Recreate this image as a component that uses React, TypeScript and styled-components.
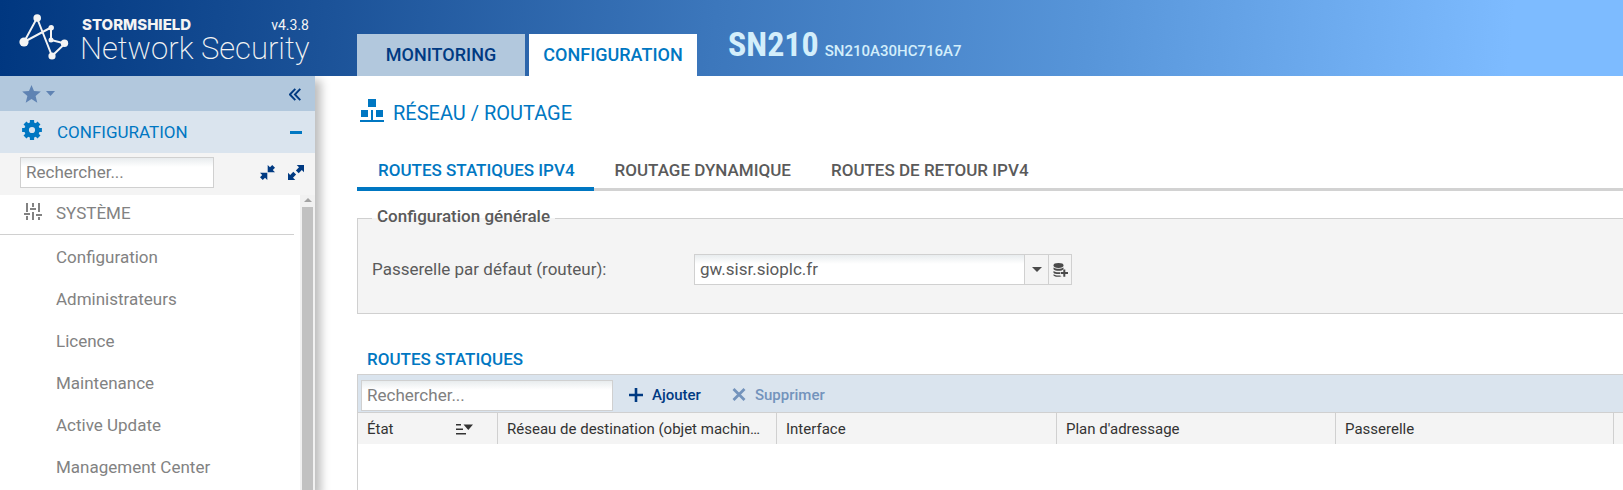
import React from 'react';
import styled, { createGlobalStyle } from 'styled-components';

const color = {
  navy: '#003a82',
  blue: '#0077c2',
  steel: '#b2c8dd',
  pale: '#dae4ee',
  panel: '#f4f4f4',
  line: '#d0d0d0',
  text: '#5a5a5a',
  muted: '#828282',
};

const GlobalStyle = createGlobalStyle`
  * { box-sizing: border-box; }
  html, body, #root { height: 100%; }
  body {
    margin: 0;
    overflow: hidden;
    background: #fff;
    color: ${color.text};
    font: 16px/20px Roboto, "Liberation Sans", sans-serif;
  }
  svg { display: block; flex: none; }
  button, input { font: inherit; margin: 0; }
  a { color: inherit; text-decoration: none; }
`;

const Page = styled.div`
  display: flex;
  flex-direction: column;
  height: 100%;
`;

const Header = styled.header`
  display: flex;
  flex: none;
  height: 76px;
  background: linear-gradient(95deg, #003780 0%, #1b5298 20%, #3c77bc 44%, #5795d9 67%, #7dbbff 93%);
`;

const Brand = styled.div`
  display: flex;
  flex: none;
  width: 357px;
  padding: 12px 0 0 18px;
  gap: 8px;
  color: #f4f4f4;
`;

const BrandText = styled.div`
  display: flex;
  flex-direction: column;
  width: 229px;
  padding-top: 4px;
`;

const BrandTop = styled.div`
  display: flex;
  justify-content: space-between;
  height: 18px;
`;

const Company = styled.span`
  padding-left: 2px;
  font: 800 15px/18px Inter, sans-serif;
`;

const Version = styled.span`
  font-size: 14px;
  line-height: 18px;
`;

const Product = styled.span`
  font-size: 31px;
  font-weight: 200;
  line-height: 30px;
  white-space: nowrap;
`;

const MainTabs = styled.nav`
  display: flex;
  align-items: flex-end;
  gap: 4px;
`;

const MainTab = styled.a<{ $active?: boolean }>`
  width: 168px;
  height: 42px;
  font-size: 18px;
  font-weight: 500;
  line-height: 42px;
  text-align: center;
  color: ${p => (p.$active ? color.blue : color.navy)};
  background: ${p => (p.$active ? '#fff' : color.steel)};
`;

const Device = styled.div`
  display: flex;
  align-items: baseline;
  gap: 6px;
  padding: 20px 0 0 31px;
  color: #d3eefb;
`;

const Model = styled.strong`
  font: 700 34px/48px "Roboto Condensed", "Liberation Sans Narrow", Roboto, sans-serif;
`;

const Serial = styled.span`
  font-size: 15px;
  font-weight: 500;
`;

const Body = styled.div`
  display: flex;
  flex: 1;
  min-height: 0;
`;

const Sidebar = styled.aside`
  display: flex;
  flex-direction: column;
  flex: none;
  width: 315px;
  background: #fff;
  box-shadow: 4px 6px 9px 2px rgba(0, 0, 0, 0.26);
  clip-path: inset(0 -20px 0 0);
`;

const SideBar = styled.div<{ $height: number; $bg: string }>`
  display: flex;
  align-items: center;
  justify-content: space-between;
  flex: none;
  height: ${p => p.$height}px;
  padding: 0 12px 0 20px;
  background: ${p => p.$bg};
`;

const SearchBar = styled(SideBar)`
  padding-bottom: 3px;
`;

const IconButton = styled.button`
  display: flex;
  align-items: center;
  gap: 5px;
  padding: 0 2px;
  border: 0;
  background: none;
  color: ${color.navy};
`;

const FavButton = styled(IconButton)`
  color: #5f83b3;
`;

const SideTitle = styled.h2`
  display: flex;
  flex: 1;
  align-items: center;
  gap: 15px;
  margin: 0;
  padding-left: 2px;
  font-size: 17px;
  font-weight: 400;
  color: ${color.blue};
`;

const ToggleButton = styled(IconButton)`
  padding: 0 1px;
  color: ${color.blue};
`;

const ToolGroup = styled.div`
  display: flex;
  gap: 9px;
  margin-right: -3px;
`;

const TextField = styled.input<{ $width: number }>`
  width: ${p => p.$width}px;
  height: 31px;
  padding: 0 5px 2px;
  border: 1px solid ${color.line};
  border-radius: 0;
  outline: 0;
  font-size: 17px;
  color: ${color.text};
  background: linear-gradient(#e8ecee, #fff 9px);
  &::placeholder { color: #808080; opacity: 1; }
`;

const MenuArea = styled.div`
  display: flex;
  flex: 1;
  min-height: 0;
  overflow: hidden;
`;

const Menu = styled.nav`
  flex: 1;
`;

const MenuGroup = styled.h3`
  display: flex;
  align-items: center;
  gap: 14px;
  height: 40px;
  margin: 0 6px 1px 0;
  padding: 0 0 3px 24px;
  border-bottom: 1px solid ${color.line};
  font-size: 17px;
  font-weight: 400;
  color: ${color.muted};
`;

const MenuList = styled.ul`
  margin: 0;
  padding: 0;
  list-style: none;
`;

const MenuLink = styled.a`
  display: block;
  height: 42px;
  padding-left: 56px;
  font-size: 17px;
  line-height: 42px;
  color: ${color.muted};
`;

const ScrollTrack = styled.div`
  display: flex;
  flex-direction: column;
  align-items: center;
  width: 15px;
  padding-top: 3px;
  gap: 5px;
  background: #f1f1f1;
`;

const ScrollThumb = styled.div`
  flex: 1;
  width: 11px;
  background: #c1c1c1;
`;

const Main = styled.main`
  display: flex;
  flex: 1;
  flex-direction: column;
  min-width: 0;
  padding-left: 42px;
`;

const PageTitle = styled.h1`
  display: flex;
  align-items: center;
  gap: 9px;
  margin: 0;
  padding: 23px 0 0 3px;
  font-size: 20px;
  font-weight: 400;
  line-height: 28px;
  color: ${color.blue};
`;

const SubTabs = styled.nav`
  display: flex;
  flex: none;
  height: 44px;
  margin-top: 20px;
  box-shadow: inset 0 -3px #d2d2d2;
`;

const SubTab = styled.a<{ $active?: boolean }>`
  padding: 0 19px 0 21px;
  border-bottom: 4px solid ${p => (p.$active ? color.blue : 'transparent')};
  font-size: 17px;
  font-weight: 500;
  line-height: 46px;
  color: ${p => (p.$active ? color.blue : color.text)};
`;

const Fieldset = styled.fieldset`
  display: flex;
  align-items: center;
  margin: 15px -1px 0 0;
  padding: 24px 14px 28px;
  border: 1px solid ${color.line};
  background: ${color.panel};
`;

const Legend = styled.legend`
  padding: 0 5px 4px;
  font-size: 17px;
  font-weight: 500;
  line-height: 20px;
`;

const FieldLabel = styled.label`
  width: 322px;
  padding-bottom: 2px;
  font-size: 17px;
`;

const Combo = styled.div`
  display: flex;
`;

const ComboButton = styled.button<{ $width: number }>`
  display: flex;
  align-items: center;
  justify-content: center;
  width: ${p => p.$width}px;
  height: 31px;
  padding: 0;
  border: 1px solid ${color.line};
  border-left: 0;
  background: ${color.panel};
  color: #4a4a4a;
`;

const GridTitle = styled.h2`
  margin: 35px 0 0;
  padding: 0 0 5px 10px;
  font-size: 17px;
  font-weight: 500;
  line-height: 20px;
  color: ${color.blue};
`;

const Grid = styled.section`
  flex: 1;
  border: solid ${color.line};
  border-width: 1px 0 0 1px;
`;

const Toolbar = styled.div`
  display: flex;
  align-items: center;
  gap: 16px;
  height: 38px;
  padding: 4px 0 0 3px;
  border-bottom: 1px solid ${color.line};
  background: ${color.pale};
`;

const ToolButton = styled.button`
  display: flex;
  align-items: center;
  gap: 9px;
  padding: 0 0 2px;
  margin-right: 15px;
  border: 0;
  background: none;
  font-size: 15px;
  font-weight: 500;
  color: ${color.navy};
  &:disabled { color: #7393bc; }
`;

const Table = styled.table`
  width: 100%;
  table-layout: fixed;
  border-collapse: separate;
  border-spacing: 0;
`;

const Column = styled.col<{ $width?: number }>`
  width: ${p => (p.$width ? `${p.$width}px` : 'auto')};
`;

const Th = styled.th`
  height: 31px;
  padding: 0 9px;
  overflow: hidden;
  border-right: 1px solid ${color.line};
  background: ${color.panel};
  font-size: 15px;
  font-weight: 400;
  line-height: 20px;
  text-align: left;
  text-overflow: ellipsis;
  white-space: nowrap;
  color: #333;
  &:last-child { border-right: 0; padding: 0; }
`;

const SortHeading = styled.div`
  display: flex;
  align-items: center;
  justify-content: space-between;
  padding-right: 15px;
`;

const Caret = ({ width = 9, height = 5 }) => (
  <svg width={width} height={height} viewBox="0 0 10 5" preserveAspectRatio="none" fill="currentColor">
    <path d="M0 0h10L5 5z" />
  </svg>
);

const Logo = () => (
  <svg width="54" height="52" viewBox="18 12 54 52" fill="#f4f4f4">
    <path d="M52 56 37 18 24 42 51 27.500V40l14 3.500z" fill="none" stroke="#f4f4f4" strokeWidth="2" />
    <circle cx="37.200" cy="18" r="3.800" />
    <circle cx="24" cy="42" r="4.600" />
    <circle cx="51.200" cy="27.700" r="2.700" />
    <circle cx="51" cy="40" r="2.500" />
    <circle cx="64.500" cy="43.300" r="3.700" />
    <circle cx="52" cy="56" r="3.600" />
  </svg>
);

const StarIcon = () => (
  <svg width="19" height="18" viewBox="0 0 19 18" fill="currentColor">
    <path d="M9.500 0l2.500 6.100 6.800.500-5.200 4.300 1.700 6.900-5.800-3.800-5.800 3.800 1.700-6.900L.200 6.600 7 6.100z" />
  </svg>
);

const GearIcon = () => (
  <svg width="20" height="24" viewBox="-10 -10 20 24" fill="none" stroke="currentColor">
    <circle r="5.400" strokeWidth="4.600" />
    {[0, 45, 90, 135].map(angle => (
      <path key={angle} d="M0-9.900v3.900M0 6v3.900" strokeWidth="4.200" transform={`rotate(${angle})`} />
    ))}
  </svg>
);

const CollapseIcon = () => (
  <svg width="12" height="15" viewBox="0 -2 12 15" fill="none" stroke="currentColor" strokeWidth="1.900">
    <path d="M6.300.800.900 6.500l5.400 5.700M11.300.800 5.900 6.500l5.400 5.700" />
  </svg>
);

const ShrinkIcon = () => (
  <svg width="15" height="15" viewBox="0 0 15 15" fill="currentColor">
    <path d="M7.700 7.300V0L10 2.200 12.200 0 15 2.800l-2.200 2.200L15 7.300zM7.300 7.700V15L5 12.800 2.800 15 0 12.200 2.200 10 0 7.700z" />
  </svg>
);

const GrowIcon = () => (
  <svg width="16" height="15" viewBox="0 0 16 15" fill="currentColor">
    <path d="M16 0v7.300l-2.200-2.200-3.100 3.100-2.800-2.800L11 2.300 8.700 0zM0 15V7.700l2.200 2.200 3.100-3.100 2.800 2.800L5 12.700 7.300 15z" />
  </svg>
);

const SlidersIcon = () => (
  <svg width="18" height="21" viewBox="0 0 18 21" fill="currentColor">
    <path d="M2 0h2v9H2zM0 10h6v2H0zM2 13h2v4H2zM8 0h2v4H8zM6 5h6v2H6zM8 9h2v8H8zM14 0h2v9h-2zM12 11h6v2h-6zM14 14h2v3h-2z" />
  </svg>
);

const NetworkIcon = () => (
  <svg width="24" height="28" viewBox="0 0 24 28" fill="currentColor">
    <path d="M8 0h8v8H8zM1 11h7v7H1zM16 11h7v7h-7zM11 11h2v10h11v2H0v-2h11z" />
  </svg>
);

const ObjectAddIcon = () => (
  <svg width="15" height="14" viewBox="0 0 15 14" fill="currentColor">
    <ellipse cx="5.500" cy="2.500" rx="5" ry="2.400" />
    <path d="M.500 4.500c2.500 1.800 7.500 1.800 10 0v1.800L8.700 7.500C5.500 8.200 2 7.800.500 6.300zM.500 8c1.800 1.300 4.200 1.500 6.500 1.200V11C4.500 11.300 1.600 11 .500 9.700zM.500 11.300C2.500 12.600 4.800 12.700 7 12.400l1.500.8C6 14 2 14.200.500 12.600z" />
    <path d="M10.300 6.500h2V9H15v2h-2.700v2.700h-2V11H7.700V9h2.600z" />
  </svg>
);

const SortIcon = () => (
  <svg width="17" height="13" viewBox="0 -2 17 13" fill="#333">
    <path d="M0 0h5v1.500H0zM0 4.500h7V6H0zM0 9h10v1.500H0zM7.500.500H17L12.300 6z" />
  </svg>
);

const PlusIcon = () => (
  <svg width="14" height="14" viewBox="0 0 14 14" stroke="currentColor" strokeWidth="2.600">
    <path d="M7 0v14M0 7h14" />
  </svg>
);

const CrossIcon = () => (
  <svg width="14" height="13" viewBox="0 0 14 13" stroke="currentColor" strokeWidth="2.800">
    <path d="M1.500 1l11 11M12.500 1l-11 11" />
  </svg>
);

const MinusIcon = () => (
  <svg width="12" height="3" viewBox="0 0 12 3" fill="currentColor">
    <path d="M0 0h12v3H0z" />
  </svg>
);

const menuItems = [
  'Configuration',
  'Administrateurs',
  'Licence',
  'Maintenance',
  'Active Update',
  'Management Center',
];

export default function App() {
  return (
    <Page>
      <GlobalStyle />
      <Header>
        <Brand>
          <Logo />
          <BrandText>
            <BrandTop>
              <Company>STORMSHIELD</Company>
              <Version>v4.3.8</Version>
            </BrandTop>
            <Product>Network Security</Product>
          </BrandText>
        </Brand>
        <MainTabs>
          <MainTab href="#monitoring">MONITORING</MainTab>
          <MainTab href="#configuration" $active>CONFIGURATION</MainTab>
        </MainTabs>
        <Device>
          <Model>SN210</Model>
          <Serial>SN210A30HC716A7</Serial>
        </Device>
      </Header>
      <Body>
        <Sidebar>
          <SideBar $height={35} $bg={color.steel}>
            <FavButton aria-label="Favoris">
              <StarIcon />
              <Caret />
            </FavButton>
            <IconButton aria-label="Réduire le menu"><CollapseIcon /></IconButton>
          </SideBar>
          <SideBar $height={42} $bg={color.pale}>
            <SideTitle><GearIcon />CONFIGURATION</SideTitle>
            <ToggleButton aria-label="Replier"><MinusIcon /></ToggleButton>
          </SideBar>
          <SearchBar $height={42} $bg={color.panel}>
            <TextField $width={194} aria-label="Rechercher dans le menu" placeholder="Rechercher..." />
            <ToolGroup>
              <IconButton aria-label="Tout replier"><ShrinkIcon /></IconButton>
              <IconButton aria-label="Tout déplier"><GrowIcon /></IconButton>
            </ToolGroup>
          </SearchBar>
          <MenuArea>
            <Menu>
              <MenuGroup><SlidersIcon />SYSTÈME</MenuGroup>
              <MenuList>
                {menuItems.map(item => (
                  <li key={item}><MenuLink href="#">{item}</MenuLink></li>
                ))}
              </MenuList>
            </Menu>
            <ScrollTrack>
              <svg width="8" height="4" viewBox="0 0 8 4" fill="#a3a3a3"><path d="M4 0l4 4H0z" /></svg>
              <ScrollThumb />
            </ScrollTrack>
          </MenuArea>
        </Sidebar>
        <Main>
          <PageTitle><NetworkIcon />RÉSEAU / ROUTAGE</PageTitle>
          <SubTabs>
            <SubTab href="#statiques" $active>ROUTES STATIQUES IPV4</SubTab>
            <SubTab href="#dynamique">ROUTAGE DYNAMIQUE</SubTab>
            <SubTab href="#retour">ROUTES DE RETOUR IPV4</SubTab>
          </SubTabs>
          <Fieldset>
            <Legend>Configuration générale</Legend>
            <FieldLabel htmlFor="gateway">Passerelle par défaut (routeur):</FieldLabel>
            <Combo>
              <TextField $width={331} id="gateway" role="combobox" aria-expanded={false} defaultValue="gw.sisr.sioplc.fr" />
              <ComboButton $width={24} aria-label="Ouvrir la liste"><Caret width={10} /></ComboButton>
              <ComboButton $width={23} aria-label="Créer un objet"><ObjectAddIcon /></ComboButton>
            </Combo>
          </Fieldset>
          <GridTitle>ROUTES STATIQUES</GridTitle>
          <Grid>
            <Toolbar>
              <TextField $width={252} aria-label="Rechercher une route" placeholder="Rechercher..." />
              <ToolButton><PlusIcon />Ajouter</ToolButton>
              <ToolButton disabled><CrossIcon />Supprimer</ToolButton>
            </Toolbar>
            <Table>
              <colgroup>
                <Column $width={140} />
                <Column $width={279} />
                <Column $width={280} />
                <Column $width={279} />
                <Column $width={278} />
                <Column />
              </colgroup>
              <thead>
                <tr>
                  <Th scope="col"><SortHeading>État<SortIcon /></SortHeading></Th>
                  <Th scope="col">Réseau de destination (objet machin…</Th>
                  <Th scope="col">Interface</Th>
                  <Th scope="col">Plan d'adressage</Th>
                  <Th scope="col">Passerelle</Th>
                  <Th />
                </tr>
              </thead>
            </Table>
          </Grid>
        </Main>
      </Body>
    </Page>
  );
}
